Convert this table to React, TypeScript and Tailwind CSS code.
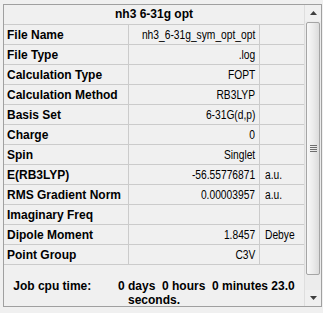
import React from "react";

type Row = { label: string; value: string; unit?: string };

const rows: Row[] = [
  { label: "File Name", value: "nh3_6-31g_sym_opt_opt" },
  { label: "File Type", value: ".log" },
  { label: "Calculation Type", value: "FOPT" },
  { label: "Calculation Method", value: "RB3LYP" },
  { label: "Basis Set", value: "6-31G(d,p)" },
  { label: "Charge", value: "0" },
  { label: "Spin", value: "Singlet" },
  { label: "E(RB3LYP)", value: "-56.55776871", unit: "a.u." },
  { label: "RMS Gradient Norm", value: "0.00003957", unit: "a.u." },
  { label: "Imaginary Freq", value: "" },
  { label: "Dipole Moment", value: "1.8457", unit: "Debye" },
  { label: "Point Group", value: "C3V" },
];

const bold = "font-['Liberation_Sans',Arial,sans-serif] font-bold text-[12px]";
const regular = "font-['Liberation_Sans',Arial,sans-serif] text-[12.5px]";

function ScrollBar() {
  return (
    <div className="w-[17px] h-full flex flex-col border-l border-[#dedede] bg-[#f0f0f0]">
      {/* up arrow */}
      <div className="h-[17px] flex items-center justify-center">
        <svg width="7" height="4" viewBox="0 0 7 4">
          <path d="M3.5 0 L7 4 L0 4 Z" fill="#404040" />
        </svg>
      </div>
      {/* track */}
      <div className="flex-1 px-[1px] pt-[1px] pb-[15px] bg-[#ececec]">
        <div className="h-[253px] rounded-[2px] border border-[#a5a5a5] bg-[linear-gradient(to_right,#f8f8f8,#ececec_50%,#dcdcdc)] flex items-center justify-center">
          <div className="flex flex-col gap-[1px]">
            <div className="w-[7px] h-[1px] bg-[#6e6e6e]" />
            <div className="w-[7px] h-[1px] bg-[#6e6e6e]" />
            <div className="w-[7px] h-[1px] bg-[#6e6e6e]" />
            <div className="w-[7px] h-[1px] bg-[#6e6e6e]" />
          </div>
        </div>
      </div>
      {/* down arrow */}
      <div className="h-[17px] flex items-center justify-center">
        <svg width="7" height="4" viewBox="0 0 7 4">
          <path d="M0 0 L7 0 L3.5 4 Z" fill="#404040" />
        </svg>
      </div>
    </div>
  );
}

export default function App() {
  return (
    <div className="w-[323px] h-[313px] bg-[#f0f0f0] pt-[4px] pl-[3px] text-black">
      <div className="w-[319px] h-[303px] border border-[#a0a0a0] flex overflow-hidden">
        <div className="w-[300px] flex flex-col">
          <div
            className={`h-[20px] border-b border-[#cbcbcb] text-center leading-[19px] ${bold}`}
          >
            nh3 6-31g opt
          </div>
          {rows.map((r) => (
            <div
              key={r.label}
              className="h-[20px] border-b border-[#cbcbcb] grid grid-cols-[125px_131px_44px]"
            >
              <div
                className={`border-r border-[#cbcbcb] pl-[3px] leading-[20px] whitespace-nowrap ${bold}`}
              >
                {r.label}
              </div>
              <div
                className={`border-r border-[#cbcbcb] pr-[4px] flex justify-end leading-[20px] whitespace-nowrap ${regular}`}
              >
                <span className="inline-block origin-right scale-x-[0.82]">{r.value}</span>
              </div>
              <div className={`pl-[5px] flex leading-[20px] whitespace-nowrap ${regular}`}>
                <span className="inline-block origin-left scale-x-[0.82]">{r.unit ?? ""}</span>
              </div>
            </div>
          ))}
          <div className={`flex-1 pt-[14px] text-center leading-[14px] ${bold}`}>
            <div className="whitespace-pre">
              {"Job cpu time:        0 days  0 hours  0 minutes 23.0"}
            </div>
            <div className="whitespace-pre">seconds.</div>
          </div>
        </div>
        <ScrollBar />
      </div>
    </div>
  );
}
